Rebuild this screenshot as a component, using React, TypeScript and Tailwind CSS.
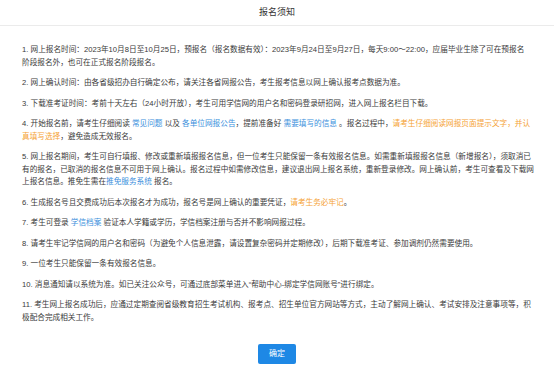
import React from "react";

const blue = "text-[#3b8fdc]";
const orange = "text-[#f5a336]";

export default function App() {
  return (
    <div className="w-[554px] h-[374px] bg-white text-[#3a3a3a] font-['Liberation_Sans','Noto_Sans_CJK_SC',sans-serif] overflow-hidden">
      {/* 标题 */}
      <div className="h-[26px] flex items-center justify-center border-b border-[#ebebeb] text-[9px] text-[#333]">
        报名须知
      </div>

      {/* 正文 */}
      <div className="pl-[22px] pr-[18px] pt-[18px] text-[7.65px] leading-[12.5px] flex flex-col gap-[8px]">
        <p>
          1. 网上报名时间：2023年10月8日至10月25日，预报名（报名数据有效）：2023年9月24日至9月27日，每天9:00～22:00，应届毕业生除了可在预报名
          <br />
          阶段报名外，也可在正式报名阶段报名。
        </p>
        <p>2. 网上确认时间：由各省级招办自行确定公布，请关注各省网报公告，考生报考信息以网上确认报考点数据为准。</p>
        <p>3. 下载准考证时间：考前十天左右（24小时开放），考生可用学信网的用户名和密码登录研招网，进入网上报名栏目下载。</p>
        <p>
          4. 开始报名前，请考生仔细阅读 <span className={blue}>常见问题</span> 以及 <span className={blue}>各单位网报公告</span>，提前准备好{" "}
          <span className={blue}>需要填写的信息</span> 。报名过程中，<span className={orange}>请考生仔细阅读网报页面提示文字，并认真填写选择</span>，避免造成无效报名。
        </p>
        <p>
          5. 网上报名期间，考生可自行填报、修改或重新填报报名信息，但一位考生只能保留一条有效报名信息。如需重新填报报名信息（新增报名），须取消已有的报名，已取消的报名信息不可用于网上确认。报名过程中如需修改信息，建议退出网上报名系统，重新登录修改。网上确认前，考生可查看及下载网上报名信息。推免生需在<span className={blue}>推免服务系统</span> 报名。
        </p>
        <p>
          6. 生成报名号且交费成功后本次报名才为成功，报名号是网上确认的重要凭证，<span className={orange}>请考生务必牢记</span>。
        </p>
        <p>
          7. 考生可登录 <span className={blue}>学信档案</span> 验证本人学籍或学历，学信档案注册与否并不影响网报过程。
        </p>
        <p>8. 请考生牢记学信网的用户名和密码（为避免个人信息泄露，请设置复杂密码并定期修改），后期下载准考证、参加调剂仍然需要使用。</p>
        <p>9. 一位考生只能保留一条有效报名信息。</p>
        <p>10. 消息通知请以系统为准。如已关注公众号，可通过底部菜单进入“帮助中心-绑定学信网账号”进行绑定。</p>
        <p>11. 考生网上报名成功后，应通过定期查阅省级教育招生考试机构、报考点、招生单位官方网站等方式，主动了解网上确认、考试安排及注意事项等，积极配合完成相关工作。</p>
      </div>

      {/* 按钮 */}
      <div className="flex justify-center mt-[20px]">
        <button className="w-[38px] h-[20px] rounded-[2px] bg-[#1e88e5] text-white text-[8px]">确定</button>
      </div>
    </div>
  );
}
